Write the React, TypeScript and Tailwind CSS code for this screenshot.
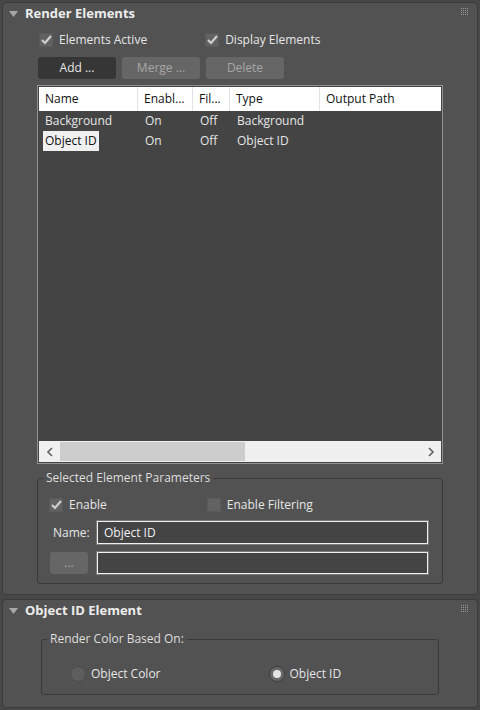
import React from "react";

const font = { fontFamily: '"Open Sans", "Noto Sans", sans-serif' };

function Dots() {
  const dots = [];
  for (let r = 0; r < 4; r++)
    for (let c = 0; c < 4; c++)
      dots.push(<rect key={`${r}-${c}`} x={c * 2} y={r * 2} width="1" height="1" fill="#9a9a9a" />);
  return (
    <svg width="8" height="8" viewBox="0 0 8 8" className="block">
      {dots}
    </svg>
  );
}

function Tri() {
  return (
    <svg width="9" height="6" viewBox="0 0 9 6" className="block">
      <path d="M0 0 L9 0 L4.5 6 Z" fill="#a8a8a8" />
    </svg>
  );
}

function Check({ checked }: { checked: boolean }) {
  return (
    <div className="w-[14px] h-[14px] bg-[#626262] border border-[#5a5a5a] flex items-center justify-center">
      {checked && (
        <svg width="11" height="10" viewBox="0 0 11 10">
          <path d="M1 5 L4 8 L10 1" stroke="#cfcfcf" strokeWidth="2.2" fill="none" />
        </svg>
      )}
    </div>
  );
}

function Header({ title }: { title: string }) {
  return (
    <div className="h-[21px] flex items-center relative">
      <div className="ml-[6px] w-[9px]">
        <Tri />
      </div>
      <div className="ml-[7px] text-[13px] font-bold text-[#ececec] leading-none">{title}</div>
      <div className="absolute right-[8px] top-[5px]">
        <Dots />
      </div>
    </div>
  );
}

export default function App() {
  return (
    <div className="w-[480px] h-[710px] bg-[#474747] pt-[2px] px-[2px] text-[12px] text-[#e6e6e6]" style={font}>
      {/* Panel 1 */}
      <div className="h-[593px] bg-[#525252] border border-[#3c3c3c] rounded-[4px] flex flex-col">
        <Header title="Render Elements" />
        {/* checkboxes */}
        <div className="mt-[9px] h-[14px] flex items-center">
          <div className="ml-[36px]"><Check checked /></div>
          <span className="ml-[6px]">Elements Active</span>
          <div className="ml-[58px]"><Check checked /></div>
          <span className="ml-[6px]">Display Elements</span>
        </div>
        {/* buttons */}
        <div className="mt-[10px] flex gap-[6px] ml-[35px]">
          <div className="w-[78px] h-[22px] rounded-[3px] bg-[#363636] flex items-center justify-center text-[#e6e6e6]">Add ...</div>
          <div className="w-[78px] h-[22px] rounded-[3px] bg-[#666666] flex items-center justify-center text-[#a6a6a6]">Merge ...</div>
          <div className="w-[78px] h-[22px] rounded-[3px] bg-[#666666] flex items-center justify-center text-[#a6a6a6]">Delete</div>
        </div>
        {/* table */}
        <div className="mt-[6px] ml-[34px] w-[406px] h-[379px] border border-[#8f9399] p-[1px] bg-[#444444] flex flex-col">
          <div className="h-[24px] bg-white flex text-[#101010]">
            <div className="w-[99px] border-r border-[#e2e2e2] pl-[6px] flex items-center">Name</div>
            <div className="w-[55px] border-r border-[#e2e2e2] pl-[6px] flex items-center">Enabl...</div>
            <div className="w-[37px] border-r border-[#e2e2e2] pl-[6px] flex items-center">Fil...</div>
            <div className="w-[90px] border-r border-[#e2e2e2] pl-[6px] flex items-center">Type</div>
            <div className="flex-1 pl-[6px] flex items-center">Output Path</div>
          </div>
          <div className="flex-1">
            <div className="h-[20px] flex items-center">
              <div className="w-[99px] pl-[6px]">Background</div>
              <div className="w-[55px] pl-[7px]">On</div>
              <div className="w-[37px] pl-[7px]">Off</div>
              <div className="w-[90px] pl-[7px]">Background</div>
            </div>
            <div className="h-[20px] flex items-center">
              <div className="w-[99px] pl-[4px] h-full flex items-center">
                <span className="bg-[#f0f0f0] text-[#111] h-full px-[2px] flex items-center">Object ID</span>
              </div>
              <div className="w-[55px] pl-[7px]">On</div>
              <div className="w-[37px] pl-[7px]">Off</div>
              <div className="w-[90px] pl-[7px]">Object ID</div>
            </div>
          </div>
          <div className="h-[21px] bg-[#f0f0f0] flex items-center relative">
            <div className="w-[21px] flex items-center justify-center">
              <svg width="8" height="10" viewBox="0 0 8 10"><path d="M6 1 L2 5 L6 9" stroke="#606060" strokeWidth="1.6" fill="none" /></svg>
            </div>
            <div className="w-[185px] h-[19px] bg-[#cdcdcd]" />
            <div className="flex-1" />
            <div className="w-[21px] flex items-center justify-center">
              <svg width="8" height="10" viewBox="0 0 8 10"><path d="M2 1 L6 5 L2 9" stroke="#606060" strokeWidth="1.6" fill="none" /></svg>
            </div>
          </div>
        </div>
        {/* group */}
        <div className="mt-[14px] ml-[34px] w-[406px] h-[106px] border border-[#3a3a3a] rounded-[3px] relative">
          <div className="absolute -top-[9px] left-[5px] px-[3px] bg-[#525252] leading-[16px] text-[#dedede]">Selected Element Parameters</div>
          <div className="mt-[18px] h-[15px] flex items-center">
            <div className="ml-[11px]"><Check checked /></div>
            <span className="ml-[6px]">Enable</span>
            <div className="ml-[100px]"><Check checked={false} /></div>
            <span className="ml-[6px]">Enable Filtering</span>
          </div>
          <div className="mt-[9px] flex items-center">
            <span className="ml-[15px] w-[44px]">Name:</span>
            <div className="w-[331px] h-[23px] bg-[#444444] border border-[#f0f0f0] shadow-[0_0_0_1px_#7a7a7a] flex items-center pl-[6px] text-[#f0f0f0]">Object ID</div>
          </div>
          <div className="mt-[8px] flex items-center">
            <div className="ml-[12px] w-[38px] h-[22px] rounded-[3px] bg-[#666666] text-[#a8a8a8] flex items-center justify-center">...</div>
            <div className="ml-[9px] w-[331px] h-[22px] bg-[#444444] border border-[#f0f0f0] shadow-[0_0_0_1px_#7a7a7a]" />
          </div>
        </div>
      </div>
      {/* Panel 2 */}
      <div className="mt-[4px] h-[109px] bg-[#525252] border border-[#3c3c3c] rounded-[4px] flex flex-col">
        <Header title="Object ID Element" />
        <div className="mt-[18px] ml-[38px] w-[398px] h-[56px] border border-[#3a3a3a] rounded-[3px] relative">
          <div className="absolute -top-[9px] left-[5px] px-[3px] bg-[#525252] leading-[16px] text-[#dedede]">Render Color Based On:</div>
          <div className="mt-[25px] flex items-center">
            <div className="ml-[28px] w-[16px] h-[16px] rounded-full bg-[#5e5e5e] border border-[#4a4a4a]" />
            <span className="ml-[5px]">Object Color</span>
            <div className="ml-[108px] w-[16px] h-[16px] rounded-full bg-[#686868] border border-[#3e3e3e] flex items-center justify-center">
              <div className="w-[8px] h-[8px] rounded-full bg-[#e4e4e4]" />
            </div>
            <span className="ml-[5px]">Object ID</span>
          </div>
        </div>
      </div>
    </div>
  );
}
